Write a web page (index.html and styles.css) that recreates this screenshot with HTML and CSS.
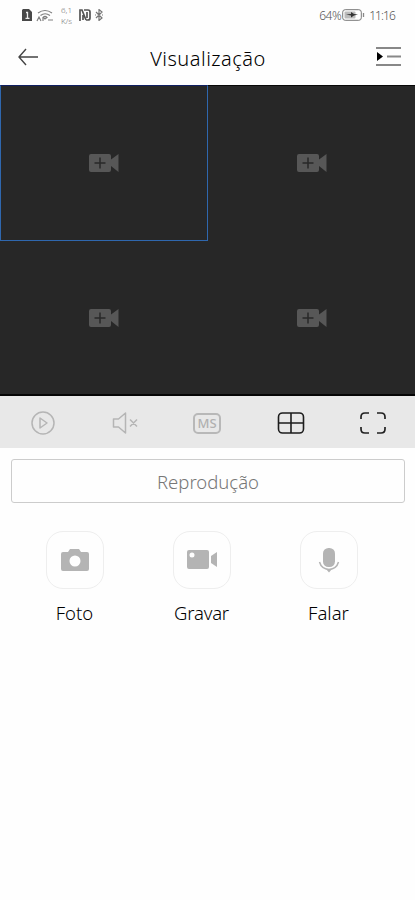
FILE: index.html
```html
<!DOCTYPE html>
<html lang="pt">
<head>
<meta charset="utf-8">
<meta name="viewport" content="width=device-width, initial-scale=1">
<title>Visualização</title>
<link rel="stylesheet" href="styles.css">
</head>
<body>
<svg class="defs" width="0" height="0" aria-hidden="true">
  <symbol id="add-camera" viewBox="0 0 30 20">
    <path fill="#575757" d="M2 1h18q2 0 2 2v3.500l7.500-5.500v18l-7.500-6v4q0 2-2 2H2q-2 0-2-2V3q0-2 2-2z"/>
    <path stroke="#292929" stroke-width="1.5" d="M5.5 10h11M11 4.500v11"/>
  </symbol>
</svg>
<header class="status">
  <div class="status-left">
    <svg class="sim" width="10" height="12" viewBox="0 0 10 12"><path fill="#484848" d="M1 0h6l3 3v9H0V1z"/><path fill="none" stroke="#eee" stroke-width="1.300" d="M4 3.500h1.500V9M3.500 9.300h4"/></svg>
    <svg class="wifi" width="18" height="13" viewBox="0 0 18 13" fill="none" stroke="#808080" stroke-width="1.200"><path d="M2 4Q9-1 16 4M4.500 6.500Q9 3 14 6.500M7 8.500q2-2 4 0l-2 1.500z"/><path d="M1 12l2-4 2 4M7 12V9M12 11h5"/></svg>
    <div class="speed"><span>6,1</span><span>K/s</span></div>
    <svg class="nfc" width="12" height="12" viewBox="0 0 12 12" fill="none" stroke="#555" stroke-width="1.700"><path d="M1 12V1h2l4 10M4 6v5M5 1h4q2 0 2 2v6q0 2-2 2H7M8 3v6"/></svg>
    <svg class="bluetooth" width="8" height="12" viewBox="0 0 8 12" fill="none" stroke="#777" stroke-width="1.200"><path d="M1 3l6 6-3 2.500V.5L7 3 1 9M0 6h1M7 6h1"/></svg>
  </div>
  <div class="status-right">
    <span class="percent">64%</span>
    <svg width="23" height="12" viewBox="0 0 23 12"><rect x=".7" y=".7" width="18.600" height="10.600" rx="2.500" fill="#fff" stroke="#777"/><rect x="2.500" y="2.500" width="11" height="7" rx="1" fill="#bbb"/><path fill="#333" d="M4 5.500l5-.5V3l3 2 4 .5-4 1-3 2V6.500z"/><path stroke="#888" stroke-width="1.300" d="M21.500 4v4"/></svg>
    <span class="clock">11:16</span>
  </div>
</header>
<nav class="titlebar">
  <svg width="22" height="20" viewBox="0 0 22 20" fill="none" stroke="#444" stroke-width="1.400"><path d="M2 10h19M9 2L2 10l7 8"/></svg>
  <h1>Visualização</h1>
  <svg width="26" height="22" viewBox="0 0 26 22"><path stroke="#888" stroke-width="2" d="M0 2h25M11 10.500h14M0 19h25"/><path fill="#000" d="M1 6l6 4.500L1 15z"/></svg>
</nav>
<main>
  <section class="grid">
    <div class="cell selected"><svg width="30" height="20"><use href="#add-camera"/></svg></div>
    <div class="cell top"><svg width="30" height="20"><use href="#add-camera"/></svg></div>
    <div class="cell"><svg width="30" height="20"><use href="#add-camera"/></svg></div>
    <div class="cell"><svg width="30" height="20"><use href="#add-camera"/></svg></div>
  </section>
  <section class="toolbar">
    <svg width="26" height="26" viewBox="0 0 26 26" fill="none" stroke="#b5b5b5" stroke-width="1.500"><circle cx="13" cy="13" r="11"/><path stroke-linejoin="round" d="M10 8v10l7-5z"/></svg>
    <svg width="26" height="26" viewBox="0 0 26 26" fill="none" stroke="#b5b5b5" stroke-width="1.500"><path stroke-linejoin="round" d="M1.500 9h5l7-6v20l-7-6h-5zM18 9.500l7 7M25 9.500l-7 7"/></svg>
    <div class="ms">MS</div>
    <svg width="28" height="26" viewBox="0 0 28 26" fill="none" stroke="#1d1d1d" stroke-width="1.600"><rect x="1.500" y="3" width="25" height="20" rx="4"/><path d="M14 3v20M1.500 13h25"/></svg>
    <svg width="26" height="26" viewBox="0 0 26 26" fill="none" stroke="#222" stroke-width="1.700"><path d="M1 9V7q0-4 4-4h4M17 3h4q4 0 4 4v2M25 17v2q0 4-4 4h-4M9 23H5q-4 0-4-4v-2"/></svg>
  </section>
  <button class="playback">Reprodução</button>
  <section class="actions">
    <div class="action">
      <div class="tile"><svg width="30" height="26" viewBox="0 0 30 26"><path fill="#b4b4b4" fill-rule="evenodd" d="M3 5h5l2-3h9l2 3h6q2 0 2 2v15q0 2-2 2H3q-2 0-2-2V7q0-2 2-2zM15 8.500a5.500 5.500 0 1 0 0 11 5.500 5.500 0 1 0 0-11z"/></svg></div>
      <span>Foto</span>
    </div>
    <div class="action">
      <div class="tile"><svg width="32" height="24" viewBox="0 0 32 24"><path fill="#b4b4b4" fill-rule="evenodd" d="M3 2h18q2 0 2 2v15q0 2-2 2H3q-2 0-2-2V4q0-2 2-2zM6 4.500a2.500 2.500 0 1 0 0 5 2.500 2.500 0 1 0 0-5zM31 4v15l-6-4V8z"/></svg></div>
      <span class="record">Gravar</span>
    </div>
    <div class="action">
      <div class="tile"><svg width="22" height="28" viewBox="0 0 22 28"><rect x="5" y="2" width="12" height="19" rx="5.500" fill="#b4b4b4"/><path fill="none" stroke="#b4b4b4" stroke-width="1.500" d="M1.500 16q2 7 9.500 7.500 7.500-.5 9.500-7.500"/><path fill="#b4b4b4" d="M8 23h6l-3 3.500z"/></svg></div>
      <span>Falar</span>
    </div>
  </section>
</main>
</body>
</html>
```
FILE: styles.css
```css
* { box-sizing: border-box; }
body { margin: 0; height: 900px; background: #fefefe; color: #000; font-family: "Noto Sans", sans-serif; font-weight: 300; overflow: hidden; }
svg { display: block; flex: none; }
.defs { display: none; }
.status { height: 30px; padding: 0 20px 0 22px; display: flex; justify-content: space-between; align-items: center; color: #555; }
.status-left, .status-right { display: flex; align-items: center; }
.wifi { margin-left: 4px; }
.speed { width: 15px; margin-left: 5px; display: flex; flex-direction: column; align-items: center; font-size: 8px; line-height: 11px; color: #777; }
.nfc { margin-left: 5px; }
.bluetooth { margin-left: 4px; }
.percent { font-size: 12px; letter-spacing: -0.5px; margin-right: 1px; }
.clock { font-size: 12px; letter-spacing: -0.9px; margin-left: 4px; }
.titlebar { height: 55px; padding: 0 13px 0 17px; display: flex; align-items: center; justify-content: space-between; }
.titlebar h1 { margin: 2px 0 0 1px; font-size: 20px; font-weight: 300; letter-spacing: 0.5px; line-height: 28px; }
.titlebar svg { margin-bottom: 2px; }
.grid { height: 311px; display: grid; grid-template-columns: 208px 207px; grid-template-rows: 155px 153px; background: #272727; border-top: 1px solid #080808; border-bottom: 2px solid #050505; }
.cell { padding-top: 1px; display: flex; align-items: center; justify-content: center; }
.selected { margin-top: -1px; padding: 0; border: 1px solid #2f67ae; border-top-color: #101f61; }
.top { padding: 0 0 1px; }
.toolbar { height: 52px; padding: 2px 29px 0 30px; background: #e8e8e8; display: flex; align-items: center; justify-content: space-between; }
.ms { width: 28px; height: 21px; border: 2px solid #b8b8b8; border-radius: 5px; color: #b1b1b1; font-size: 13px; font-weight: 500; line-height: 17px; text-align: center; }
.playback { display: block; width: 394px; height: 44px; margin: 11px 0 0 11px; padding: 1px 0 0; border: 1px solid #ccc; border-radius: 3px; background: #fefefe; color: #777; font: 300 18.500px "Noto Sans", sans-serif; }
.actions { margin-top: 28px; padding-left: 11px; display: grid; grid-template-columns: repeat(3, 127px); }
.action { display: flex; flex-direction: column; align-items: center; font-size: 18.500px; line-height: 26px; }
.record { letter-spacing: -0.2px; }
.tile { width: 58px; height: 58px; margin-bottom: 11px; border: 1px solid #eee; border-radius: 17px; display: flex; align-items: center; justify-content: center; }
```
